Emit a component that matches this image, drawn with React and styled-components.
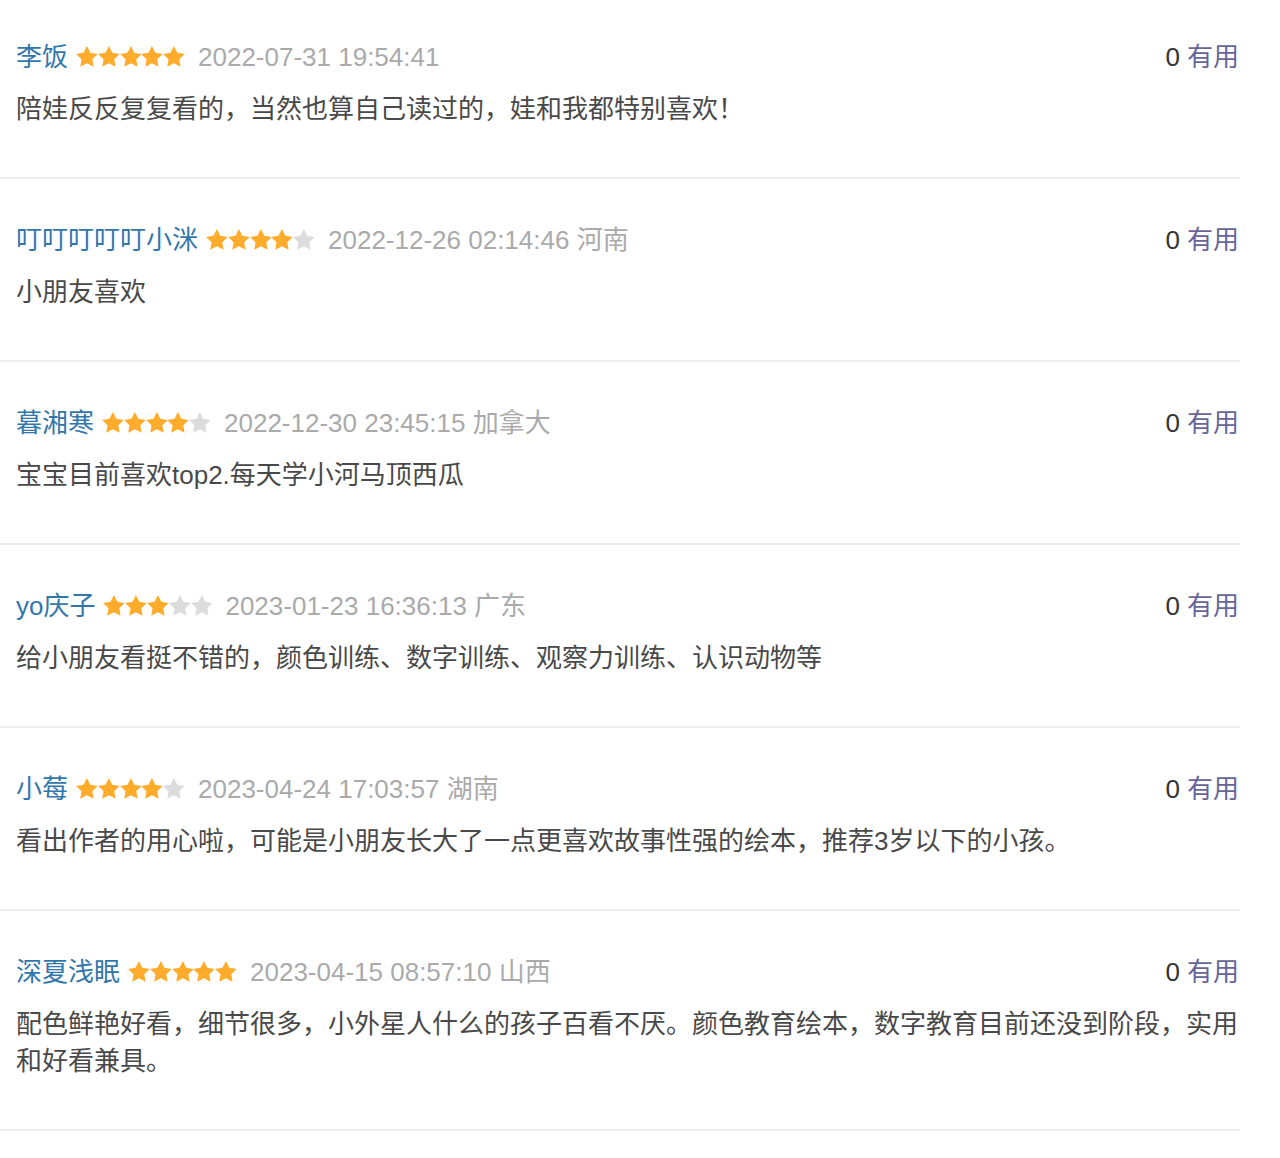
import React from "react";
import styled, { createGlobalStyle } from "styled-components";

const Global = createGlobalStyle`
  html, body { margin: 0; padding: 0; background: #fff; }
  body { font-family: "Liberation Sans", "Noto Sans CJK SC", sans-serif; }
`;

const List = styled.ul`
  list-style: none;
  margin: 0;
  padding: 0;
  width: 1240px;
`;

const Item = styled.li`
  padding: 43px 1px 49px 16px;
  border-bottom: 2px solid #ededed;
  &:first-child { padding-top: 39px; }
`;

const Header = styled.div`
  display: flex;
  align-items: center;
  height: 37px;
  font-size: 26px;
  line-height: 37px;
`;

const Name = styled.span`
  color: #3377aa;
`;

const Stars = styled.span`
  display: inline-flex;
  margin-left: 8px;
  margin-top: -2px;
`;

const Meta = styled.span`
  color: #aaaaaa;
  margin-left: 13px;
`;

const Vote = styled.span`
  margin-left: auto;
  color: #333;
`;

const Useful = styled.span`
  color: #666699;
  margin-left: 7px;
`;

const Body = styled.p`
  margin: 15px 0 0;
  font-size: 26px;
  line-height: 37px;
  color: #494949;
`;

const Star = ({ on }) => (
  <svg width="21.8" height="21" viewBox="0.5 0.7 23 22" preserveAspectRatio="none">
    <polygon
      points="12,0.8 15.6,7.9 23.41,9.09 17.7,14.65 19.05,22.51 12,18.9 4.95,22.51 6.3,14.65 0.59,9.09 8.4,7.9"
      fill={on ? "#ffac2d" : "#dcdcdc"}
    />
  </svg>
);

const data = [
  { name: "李饭", stars: 5, meta: "2022-07-31 19:54:41", text: "陪娃反反复复看的，当然也算自己读过的，娃和我都特别喜欢！" },
  { name: "叮叮叮叮叮小洣", stars: 4, meta: "2022-12-26 02:14:46 河南", text: "小朋友喜欢" },
  { name: "暮湘寒", stars: 4, meta: "2022-12-30 23:45:15 加拿大", text: "宝宝目前喜欢top2.每天学小河马顶西瓜" },
  { name: "yo庆子", stars: 3, meta: "2023-01-23 16:36:13 广东", text: "给小朋友看挺不错的，颜色训练、数字训练、观察力训练、认识动物等" },
  { name: "小莓", stars: 4, meta: "2023-04-24 17:03:57 湖南", text: "看出作者的用心啦，可能是小朋友长大了一点更喜欢故事性强的绘本，推荐3岁以下的小孩。" },
  { name: "深夏浅眠", stars: 5, meta: "2023-04-15 08:57:10 山西", text: "配色鲜艳好看，细节很多，小外星人什么的孩子百看不厌。颜色教育绘本，数字教育目前还没到阶段，实用和好看兼具。" },
];

export default function App() {
  return (
    <>
      <Global />
      <List>
        {data.map((d, i) => (
          <Item key={i}>
            <Header>
              <Name>{d.name}</Name>
              <Stars>
                {[0, 1, 2, 3, 4].map((k) => (
                  <Star key={k} on={k < d.stars} />
                ))}
              </Stars>
              <Meta>{d.meta}</Meta>
              <Vote>
                0<Useful>有用</Useful>
              </Vote>
            </Header>
            <Body>{d.text}</Body>
          </Item>
        ))}
      </List>
    </>
  );
}
